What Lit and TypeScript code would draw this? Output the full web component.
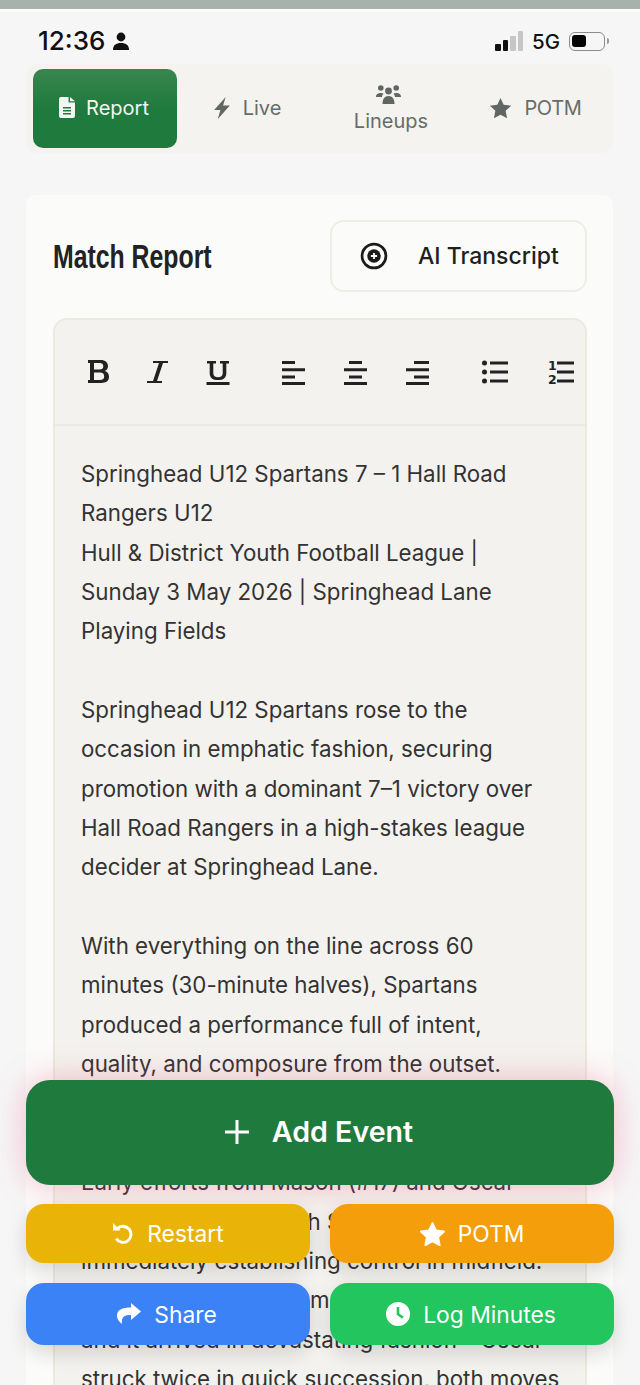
import { LitElement, html, css, svg } from "lit";
import { customElement } from "lit/decorators.js";

const star = svg`<path stroke-linejoin="round" d="M12 2.500l2.900 6.200 6.800.9-5 4.700 1.300 6.800-6-3.300-6 3.300 1.300-6.800-5-4.700 6.800-.9z"/>`;

@customElement("app-root")
export class AppRoot extends LitElement {
  static styles = css`
    :host { display: block; width: 640px; height: 1385px; overflow: hidden; position: relative; background: #f6f6f7; font-family: Inter, "Liberation Sans", sans-serif; }
    * { box-sizing: border-box; }
    .topbar { height: 9px; background: #a9b1ac; }
    .topline { height: 2px; background: #fdfdfb; }
    .status { height: 53px; padding: 8px 35px 0 38px; display: flex; align-items: flex-start; justify-content: space-between; }
    .time { display: flex; align-items: center; gap: 7px; font: 500 26px/44px Inter, sans-serif; color: #111; height: 44px; }
    .right { display: flex; align-items: center; gap: 9px; height: 44px; font: 500 20.500px Inter, sans-serif; color: #111; }
    .bars { display: flex; align-items: flex-end; gap: 2px; height: 20px; }
    .bars i { display: block; width: 5.500px; background: #111; border-radius: 1px; }
    .bars i.off { background: #c6c6c6; }
    .b1 { height: 7px; } .b2 { height: 11px; } .b3 { height: 15px; } .b4 { height: 20px; }
    .batt { width: 36px; height: 19px; border: 1.500px solid #8b8b8b; border-radius: 6px; padding: 2px; position: relative; }
    .batt b { display: block; width: 14px; height: 12px; background: #050505; border-radius: 3px; }
    .batt::after { content: ""; position: absolute; right: -5px; top: 5px; width: 2px; height: 6px; background: #9a9a9a; border-radius: 0 2px 2px 0; }
    .tabs { margin: 0 27px 0 26px; height: 89px; background: #f4f3ef; border-radius: 10px; padding: 5px 7px; display: flex; }
    .tab { display: flex; align-items: center; justify-content: center; gap: 12px; color: #666c69; font-size: 20px; font-weight: 400; padding-bottom: 2px; }
    .tab svg { fill: #5f6663; }
    .tab.active { width: 144px; height: 79px; gap: 11px; padding-right: 2px; background: linear-gradient(#38864f, #1f7a3d 50%); color: #f2f7f3; border-radius: 10px; }
    .tab.active svg { fill: #f2f7f3; }
    .t2 { width: 140px; }
    .t3 { width: 148px; flex-direction: column; gap: 4px; padding: 0; }
    .t3 svg { margin-right: 5px; }
    .t4 { flex: 1; letter-spacing: -.3px; }
    .card { margin: 42px 27px 0 26px; background: #fbfbf9; border-radius: 10px 10px 0 0; padding: 25px 26px 0 27px; height: 1300px; }
    .head { display: flex; justify-content: space-between; align-items: center; height: 72px; }
    h2 { margin: 0; font: 700 34px/40px "Liberation Sans", sans-serif; color: #222; transform: scaleX(.73); transform-origin: left; white-space: nowrap; }
    .ai { width: 257px; height: 72px; border: 2px solid #eeeee4; border-radius: 14px; background: #fbfbf9; display: flex; align-items: center; gap: 30px; padding-left: 28px; font-size: 23px; font-weight: 500; color: #1f1f1f; }
    .editor { margin-top: 26px; border: 2px solid #ebeadf; border-radius: 14px 14px 0 0; background: #f3f2ee; }
    .tools { height: 106px; border-bottom: 2px solid #ebeadf; display: flex; align-items: center; padding-left: 30px; }
    .tools svg { display: block; overflow: visible; }
    .ico { fill: #222; stroke: none; }
    .num { font: 700 12.500px "DejaVu Sans", sans-serif; }
    .text { padding: 28px 0 0 26px; font-size: 22.300px; line-height: 39.340px; color: #333; white-space: pre; overflow: hidden; }
    .actions { position: absolute; left: 26px; top: 1080px; width: 588px; display: grid; grid-template-columns: 284px 284px; column-gap: 20px; }
    .btn { height: 59px; border-radius: 18px; color: #fff; display: flex; align-items: center; justify-content: center; gap: 13px; font-size: 22.800px; font-weight: 400; box-shadow: 0 8px 20px rgba(0,0,0,.14); }
    .btn svg { fill: #fff; stroke: #fff; stroke-width: 0; }
    .add { grid-column: 1 / 3; height: 105px; border-radius: 24px; background: #1f7a3d; font-size: 28.600px; font-weight: 600; gap: 23px; margin-bottom: 19px; padding: 0 2px 2px 0; box-shadow: 0 0 32px rgba(236,72,120,.35); }
    .restart { background: #eab308; margin-bottom: 20px; }
    .potm { background: #f59e0b; margin-bottom: 20px; }
    .potm svg { stroke-width: 1.600px; }
    .share { background: #3b82f6; height: 62px; padding-right: 2px; }
    .minutes { background: #22c55e; height: 62px; padding-right: 2px; }
  `;

  render() {
    return html`
      <div class="topbar"></div><div class="topline"></div>
      <div class="status">
        <div class="time">12:36
          <svg width="18" height="19" viewBox="0 0 18 19" fill="#111"><circle cx="9" cy="5" r="4.400"/><path d="M1 18c0-5 3-7 8-7s8 2 8 7z"/></svg>
        </div>
        <div class="right">
          <div class="bars"><i class="b1"></i><i class="b2"></i><i class="off b3"></i><i class="off b4"></i></div>
          <span>5G</span>
          <div class="batt"><b></b></div>
        </div>
      </div>
      <div class="tabs">
        <div class="tab active">
          <svg width="16" height="21" viewBox="0 0 16 21"><path fill-rule="evenodd" d="M2 0h7.500v5.500H16V19a2 2 0 0 1-2 2H2a2 2 0 0 1-2-2V2a2 2 0 0 1 2-2zM11 0l5 4.200h-5zM4 10v1.400h8V10zm0 3v1.400h8V13zm0 3v1.400h8V16z"/></svg>
          Report
        </div>
        <div class="tab t2">
          <svg width="18" height="22" viewBox="0 0 15 21"><path d="M11 0L0 12.500h6L3.500 21 15 8H8.500z"/></svg>
          Live
        </div>
        <div class="tab t3">
          <svg width="25" height="20" viewBox="0 0 25 20"><circle cx="4.800" cy="3" r="2.800"/><circle cx="20.200" cy="3" r="2.800"/><circle cx="12.500" cy="6" r="3.400"/><path d="M0 12c0-3 2-4 5-4 1 0 2 .3 2.600.7C6.400 9.700 6 11 6 12zM25 12c0-3-2-4-5-4-1 0-2 .3-2.600.7 1.200 1 1.600 2.300 1.600 3.300zM6.500 19c0-5 2-8 6-8s6 3 6 8z"/></svg>
          <span>Lineups</span>
        </div>
        <div class="tab t4">
          <svg width="23" height="22" viewBox="1.500 1.800 21 19.800">${star}</svg>
          POTM
        </div>
      </div>
      <div class="card">
        <div class="head">
          <h2>Match Report</h2>
          <div class="ai">
            <svg width="28" height="28" viewBox="0 0 26 27"><circle cx="13" cy="13.500" r="11.500" fill="none" stroke="#1c1c1c" stroke-width="2.600"/><circle cx="13" cy="13.500" r="6.500" fill="#1c1c1c"/><path d="M13 10.500v6M10 13.500h6" stroke="#fbfbf9" stroke-width="1.800"/></svg>
            AI Transcript
          </div>
        </div>
        <div class="editor">
          <div class="tools">
            <svg width="492" height="26" viewBox="0 0 492 26" class="ico">
              <path fill-rule="evenodd" d="M3 1h12.500c5 0 7.500 2.700 7.500 6.200 0 2.300-1.200 4-3.300 4.900 2.800.8 4.300 2.900 4.300 5.700 0 4.200-2.800 6.200-7.800 6.200H3v-3h2V4H3zm6 3v6.500h5.500c2.500 0 3.800-1.100 3.800-3.200S17 4 14.500 4zm0 9.500V21h6c2.900 0 4.200-1.200 4.200-3.700s-1.300-3.800-4.200-3.800z"/>
              <path d="M68 2h15v2H78L72 22h5v2H62v-2h6L74 4h-6z"/>
              <path d="M122 2h9v2.400h-2.700v9.500c0 3 1.700 4.300 4.700 4.300s4.700-1.300 4.700-4.300V4.400H135V2h9v2.400h-2.700v9.800c0 4.700-3.100 6.900-8.300 6.900s-8.300-2.200-8.300-6.900V4.400H122zM121.500 23h23v3h-23z"/>
              <path d="M197 2h13v3h-13zM197 9.300h23v3h-23zM197 16.500h13v3h-13zM197 23h23v3h-23z"/>
              <path d="M264 2h13v3h-13zM259 9.300h23v3h-23zM264 16.500h13v3h-13zM259 23h23v3h-23z"/>
              <path d="M329 2h15v3h-15zM321 9.300h23v3h-23zM329 16.500h15v3h-15zM321 23h23v3h-23z"/>
              <circle cx="399.500" cy="4" r="2.500"/><circle cx="399.500" cy="13" r="2.500"/><circle cx="399.500" cy="22" r="2.500"/>
              <path d="M405 2.500h18v3h-18zM405 11.500h18v3h-18zM405 20.500h18v3h-18z"/>
              <path d="M472 2.500h17v3h-17zM472 11.500h17v3h-17zM472 20.500h17v3h-17z"/>
              <text class="num" x="463" y="11">1</text>
              <text class="num" x="463" y="25">2</text>
            </svg>
          </div>
          <div class="text">Springhead U12 Spartans 7 – 1 Hall Road
Rangers U12
Hull &amp; District Youth Football League |
Sunday 3 May 2026 | Springhead Lane
Playing Fields

Springhead U12 Spartans rose to the
occasion in emphatic fashion, securing
promotion with a dominant 7–1 victory over
Hall Road Rangers in a high-stakes league
decider at Springhead Lane.

With everything on the line across 60
minutes (30-minute halves), Spartans
produced a performance full of intent,
quality, and composure from the outset.


Early efforts from Mason (#17) and Oscar
tested the keeper, with Spartans
immediately establishing control in midfield.
The first goal soon came
and it arrived in devastating fashion – Oscar
struck twice in quick succession, both moves</div>
        </div>
      </div>
      <div class="actions">
        <div class="btn add">
          <svg width="24" height="24" viewBox="0 0 24 24"><path d="M10.500 0h3v10.500H24v3H13.500V24h-3V13.500H0v-3h10.500z"/></svg>
          Add Event
        </div>
        <div class="btn restart">
          <svg width="22" height="22" viewBox="0 0 22 22"><path d="M1 0l7.500 7.500H1zM4.300 4.500A9.500 9.500 0 1 1 3 16.500l2.500-1.700A6.500 6.500 0 1 0 6.500 6.700z"/></svg>
          Restart
        </div>
        <div class="btn potm">
          <svg width="25" height="24" viewBox="1.500 1.800 21 19.800">${star}</svg>
          POTM
        </div>
        <div class="btn share">
          <svg width="24" height="22" viewBox="0 0 24 22"><path d="M14 0l10 8.500L14 17v-5C8 12 4 13.500 5 21 1.500 18.500 0 15.500 0 12.500 0 7 5 4.500 14 4.500z"/></svg>
          Share
        </div>
        <div class="btn minutes">
          <svg width="24" height="24" viewBox="0 0 24 24"><path fill-rule="evenodd" d="M12 0a12 12 0 1 1 0 24 12 12 0 0 1 0-24zM10.700 5v7.700l5.500 4 1.500-2-4.400-3.200V5z"/></svg>
          Log Minutes
        </div>
      </div>
    `;
  }
}
